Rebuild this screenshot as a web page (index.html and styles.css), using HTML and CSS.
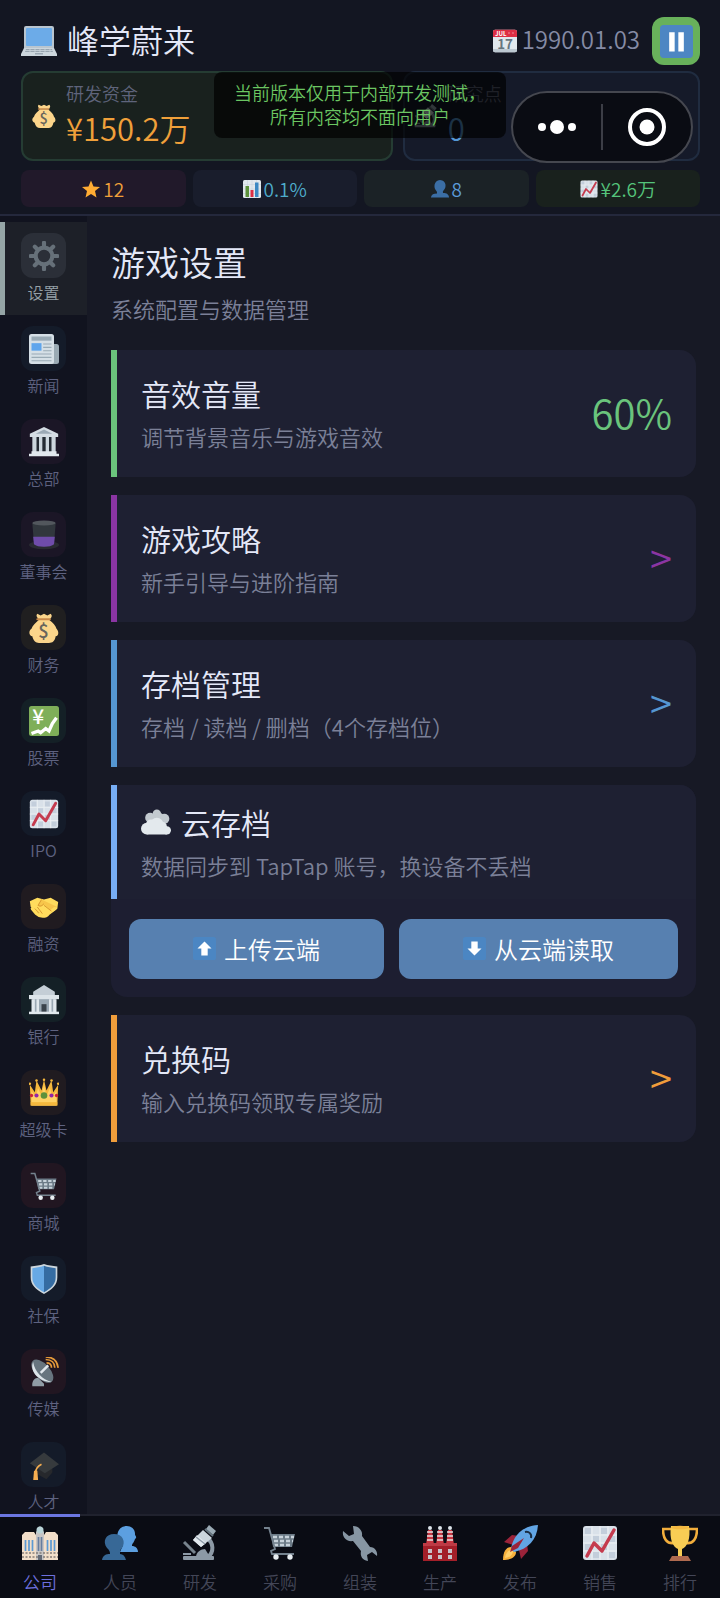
FILE: index.html
```html
<!DOCTYPE html>
<html lang="zh-CN">
<head>
<meta charset="utf-8">
<meta name="viewport" content="width=device-width, initial-scale=1">
<title>峰学蔚来</title>
<link rel="stylesheet" href="styles.css">
</head>
<body>
<svg class="sprite" aria-hidden="true">
  <symbol id="laptop" viewBox="0 0 36 36">
    <rect x="3" y="3" width="30" height="24" rx="2" fill="#b9c5cf"/><rect x="5" y="5" width="26" height="18" rx="1" fill="#6cabe8"/>
    <path d="M3 25h30l3 6v2H0v-2z" fill="#ccd6dd"/><path d="M5 26h26l1 3H4z" fill="#98a5b0"/><path d="M4 27.500h28M9 26v3M14 26v3M19 26v3M24 26v3M29 26v3" stroke="#ccd6dd" stroke-width=".8"/><path d="M14 30h8v1.500h-8z" fill="#9aa7b2"/>
  </symbol>
  <symbol id="calendar" viewBox="0 0 36 36">
    <rect y="1" width="36" height="34" rx="3" fill="#e1e8ed"/><path d="M0 12V4a3 3 0 0 1 3-3h30a3 3 0 0 1 3 3v8z" fill="#dd2e44"/><path d="M0 30h36v2a3 3 0 0 1-3 3H3a3 3 0 0 1-3-3z" fill="#bcc8d1"/>
    <text x="3" y="10" font-size="9" font-weight="700" fill="#fff">JUL</text><text x="18" y="30" text-anchor="middle" font-size="20" font-weight="700" fill="#66757f">17</text><circle cx="24" cy="6" r="1" fill="#f4abba"/><circle cx="30" cy="6" r="1" fill="#f4abba"/>
  </symbol>
  <symbol id="pause" viewBox="0 0 36 36"><rect width="36" height="36" rx="4" fill="#4d86c3"/><path d="M10 8h6v21h-6zM20 8h6v21h-6z" fill="#fff"/></symbol>
  <symbol id="bag" viewBox="0 0 36 36">
    <path d="M12 8C8 12 4 15 3 19c-4 3-3 8 1 9 1 5 4 8 8 8h12c4 0 7-2 8-8 4-1 4-6 1-9-1-4-4-7-9-11z" fill="#fbd58b"/><path d="M10 1l4 2 4-2 4 2 4-2c3 3 0 5-1 7H12C9 5 8 3 10 1z" fill="#fbd58b"/><path d="M10 7.500h15" stroke="#c98a4b" stroke-width="2.500" stroke-linecap="round"/>
    <text x="17.500" y="30" text-anchor="middle" font-size="22" font-weight="500" fill="#67645c">$</text>
  </symbol>
  <symbol id="scope" viewBox="0 0 36 36">
    <path d="M2 17l11 11" stroke="#78848e" stroke-width="3"/><path d="M25 13c7 5 7 14 1 19" fill="none" stroke="#8c99a5" stroke-width="4"/>
    <path d="M14 32c0-5 5-8 9-8l5 8z" fill="#8c99a5"/><rect x="1" y="31" width="31" height="4" rx="1" fill="#8c99a5"/><path d="M1 28h8v2H1z" fill="#8c99a5"/>
    <path d="M21 5l9 8-11 9-8-7z" fill="#ccd6dd"/><path d="M15 10l9 8-5 4-8-7z" fill="#e1e8ed"/><path d="M14 12l9 7" stroke="#8c99a5" stroke-width="1.500"/><path d="M27 0l7 6-3 4-7-6z" fill="#9aaab4"/><path d="M23 4l8 7" stroke="#66757f" stroke-width="2"/>
  </symbol>
  <symbol id="star" viewBox="0 0 36 36"><path d="M18 1l5 12 13 1-10 8 3 13-11-7-11 7 3-13L0 14l13-1z" fill="#ffac33"/></symbol>
  <symbol id="bars" viewBox="0 0 36 36"><rect width="36" height="36" rx="3" fill="#e1e8ed"/><path d="M0 9h36M0 18h36M0 27h36M9 0v36M18 0v36M27 0v36" stroke="#c5d0d8"/><path d="M5 12h7v22H5z" fill="#5c913b"/><path d="M15 20h6v14h-6z" fill="#dd2e44"/><path d="M24 5h7v29h-7z" fill="#3b88c3"/></symbol>
  <symbol id="person" viewBox="0 0 36 36"><path d="M12 27c0-3 0-4-2-6-5-5-5-20 8-21 14 1 13 16 7 21-2 2-1 3-1 5 8 0 11 3 12 8v1H0v-1c1-5 5-7 12-7z" fill="#3b6ea5"/></symbol>
  <symbol id="chart" viewBox="0 0 36 36"><rect x="1" y="1" width="34" height="34" rx="3" fill="#d9e1e9"/><path d="M3 3h6v6H3zM19 3h6v6h-6zM11 11h6v6h-6zM27 11h6v6h-6zM3 19h6v6H3zM19 19h6v6h-6zM11 27h6v6h-6zM27 27h6v6h-6z" fill="#c3cedb"/><path d="M1 10h34M1 18h34M1 26h34M10 1v34M18 1v34M26 1v34" stroke="#edf1f4"/><path d="M5 31l7-13 8 8L32 5" fill="none" stroke="#c53b4e" stroke-width="3.500" stroke-linecap="round" stroke-linejoin="round"/></symbol>
  <symbol id="gear" viewBox="0 0 36 36"><g fill="none" stroke="#667079"><circle cx="18" cy="18" r="10" stroke-width="5"/><path d="M18 2v5M18 29v5M2 18h5M29 18h5M7 7l3 3M26 26l3 3M29 7l-3 3M10 26l-3 3" stroke-width="5" stroke-linecap="round"/></g></symbol>
  <symbol id="news" viewBox="0 0 36 36"><rect x="22" y="12" width="14" height="24" rx="3" fill="#9aaab4"/><rect width="30" height="36" rx="3" fill="#d5dfe6"/><path d="M3 3h24v5H3z" fill="#99aab5"/><rect x="3" y="11" width="12" height="9" fill="#5fa5ec"/><path d="M17 12h10M17 16h10M17 20h10M3 24h24M3 28h24M3 32h24" stroke="#99aab5" stroke-width="1.300"/></symbol>
  <symbol id="temple" viewBox="0 0 36 36"><path d="M5 11h26v20H5z" fill="#242b33"/><path d="M4 12h5v18H4zM12 12h4v18h-4zM20 12h4v18h-4zM27 12h5v18h-5z" fill="#ccd6dd"/><path d="M18 0L1 8v4h34V8z" fill="#d5dde4"/><path d="M18 3l10 5H8z" fill="#9ba9b5"/><path d="M3 29h30v3h3v3H0v-3h3z" fill="#e1e8ed"/></symbol>
  <symbol id="hat" viewBox="0 0 36 36"><ellipse cx="18" cy="30" rx="18" ry="5" fill="#292b32"/><path d="M4 4h28l-2 25c-4 4-20 4-24 0z" fill="#31373d"/><path d="M5 20h26l-1 9c-4 4-20 4-24 0z" fill="#6f4caa"/><ellipse cx="18" cy="3.500" rx="14" ry="3" fill="#52575d"/></symbol>
  <symbol id="yen" viewBox="0 0 36 36"><rect width="36" height="36" rx="3" fill="#7faf59"/><path d="M3 33l8-3 3 2 6-5 4 3 4-9 5-7" fill="none" stroke="#fff" stroke-width="4"/><text x="11" y="22" text-anchor="middle" font-size="25" font-weight="500" fill="#fff">¥</text></symbol>
  <symbol id="hands" viewBox="0 0 36 36"><path d="M1 11l9-4 8 2 8-2 9 5-1 8-14 9-6-1L2 18z" fill="#ffdc5d"/><path d="M15 9l-5 7c2 3 6 1 8-1l9 8c3 0 4-2 4-4l3-1" fill="#f7c64b"/><path d="M4 20l5 6c4 4 11 4 14 0l8-6" fill="none" stroke="#ffdc5d" stroke-width="4" stroke-linecap="round"/><path d="M7 20l5 5M10 18l6 8M18 16l9 7M15 9l-4 7c3 2 5 0 7-2" fill="none" stroke="#d99b32" stroke-width="1.200"/></symbol>
  <symbol id="bank" viewBox="0 0 36 36"><path d="M4 15h28v18H4z" fill="#9aa8b3"/><path d="M18 0L5 8v7h26V8z" fill="#c4ced6"/><path d="M0 12h36v5H0z" fill="#dce4e9"/><path d="M3 17h4v16H3zM9 17h3v16H9zM24 17h3v16h-3zM29 17h4v16h-4z" fill="#e1e8ed"/><path d="M15 23h6v10h-6z" fill="#3a434b"/><path d="M0 32h36v3H0z" fill="#e1e8ed"/></symbol>
  <symbol id="crown" viewBox="0 0 36 36"><path d="M2 33L1 8l6 9 2-14 6 12 3-13 3 13 6-12 2 14 6-9-1 25z" fill="#f5b83d"/><path d="M3 33V16l5 6 3-10 4 10 3-14 3 14 4-10 3 10 5-6v17z" fill="#ffd266"/><path d="M2 29h32v4H2z" fill="#f5b83d"/><g fill="#f5b83d"><circle cx="1" cy="7" r="1.500"/><circle cx="9" cy="3" r="1.500"/><circle cx="18" cy="2" r="1.500"/><circle cx="27" cy="3" r="1.500"/><circle cx="35" cy="7" r="1.500"/></g><circle cx="18" cy="21" r="4" fill="#5c913b"/><circle cx="9" cy="21" r="2.500" fill="#9226a8"/><circle cx="27" cy="21" r="2.500" fill="#9226a8"/><circle cx="3" cy="21" r="2" fill="#c23"/><circle cx="33" cy="21" r="2" fill="#c23"/></symbol>
  <symbol id="cart" viewBox="0 0 36 36"><path d="M9 9h24l-3 13H11z" fill="#6c7b87"/><g stroke="#c7d2da" stroke-width="2.500" stroke-dasharray="4 2"><path d="M11 12h21M12 16h19M12 20h18"/></g><path d="M2 3h5l6 21-4 2 1 3h22" fill="none" stroke="#74828e" stroke-width="1.800"/><circle cx="14" cy="32" r="2.700" fill="#e7edf1"/><circle cx="28" cy="32" r="2.700" fill="#e7edf1"/></symbol>
  <symbol id="shield" viewBox="0 0 36 36"><path d="M18 0c5 2 10 2 16 3v13c0 9-6 15-16 20C8 31 2 25 2 16V3c6-1 11-1 16-3z" fill="#ccd6dd"/><path d="M18 2C13 4 9 4 4 5v11c0 8 5 13 14 18z" fill="#67a9e5"/><path d="M18 2c5 2 9 2 14 3v11c0 8-5 13-14 18z" fill="#356ca2"/></symbol>
  <symbol id="dish" viewBox="0 0 36 36"><path d="M4 35c-1-6 3-10 7-10l7 7v3z" fill="#8f9ca5"/><ellipse cx="16" cy="17" rx="9" ry="17" transform="rotate(-42 16 17)" fill="#67757f"/><path d="M5 6c-5 11 7 24 22 24C16 27 7 18 5 6z" fill="#dce4e9"/><path d="M14 19l9-9" stroke="#e1e8ed" stroke-width="3"/><path d="M21 7c4 0 6 2 6 6M20 3c7 0 11 4 11 10M20 0c9 0 14 5 15 13" fill="none" stroke="#e69a3a" stroke-width="2"/></symbol>
  <symbol id="grad" viewBox="0 0 36 36"><path d="M8 20v8l13 7 7-8v-9z" fill="#26282c"/><path d="M18 3l18 14-17 11L1 16z" fill="#363a3d"/><path d="M15 17c-4 2-7 4-7 10" fill="none" stroke="#f5ad50" stroke-width="2"/><path d="M6 25h4l1 12H5z" fill="#f5ad50"/></symbol>
  <symbol id="cloud" viewBox="0 0 36 36"><g fill="#c3cad0"><circle cx="19" cy="8" r="5"/><circle cx="11" cy="13" r="6"/><circle cx="28" cy="14" r="6"/><circle cx="20" cy="14" r="8"/></g><g fill="#e3e9ed"><circle cx="19" cy="21" r="8"/><circle cx="7" cy="26" r="7"/><circle cx="12" cy="21" r="6"/><circle cx="26" cy="23" r="5"/><circle cx="31" cy="28" r="5"/><path d="M7 23h24v10H7z"/></g></symbol>
  <symbol id="up" viewBox="0 0 36 36"><rect width="36" height="36" rx="4" fill="#4b86c3"/><path d="M18 7l11 11h-6v11H13V18H7z" fill="#fff"/></symbol>
  <symbol id="down" viewBox="0 0 36 36"><rect width="36" height="36" rx="4" fill="#4b86c3"/><path d="M18 29L7 18h6V7h10v11h6z" fill="#fff"/></symbol>
  <symbol id="office" viewBox="0 0 36 36"><path d="M0 10l3-3h9l2 3h8l2-3h9l3 3v25H0z" fill="#f2dfca"/><path d="M14 7l4-6 4 6v28h-8z" fill="#c7c5c5"/><circle cx="18" cy="5" r="3.500" fill="#b9d4d8"/><path d="M3.500 15v11M7 15v11M10.500 15v11M25.500 15v11M29 15v11M32.500 15v11" stroke="#5c9ad3" stroke-width="1.700"/><path d="M16.500 12v14M19.500 12v14" stroke="#667d9e" stroke-width="1.700"/><path d="M0 28h36M0 32h36" stroke="#857e78" stroke-dasharray="2 1.500" stroke-width="1.500"/><path d="M16 30h4v5h-4z" fill="#646b77"/></symbol>
  <symbol id="people" viewBox="0 0 36 36"><path d="M21 20c-4-4-7-7-5-13 3-9 18-8 17 3 1 1 2 3 0 4-1 4-3 4-3 7 3 0 6 2 6 6H18z" fill="#5c9fe0"/><path d="M8 29c0-3-1-4-3-6-5-7-1-14 7-14 9 0 12 8 8 14-2 2-2 3-2 6 3 0 5 2 6 6H0c1-5 4-6 8-6z" fill="#376896"/></symbol>
  <symbol id="wrench" viewBox="0 0 36 36"><path d="M1 6l6 5 5-2-1-8c6 0 10 5 9 10l8 11c5 0 8 5 7 9l-5-4-5 3 1 6c-6-1-8-5-7-10l-8-10C4 17 0 12 1 6z" fill="#8796a3"/></symbol>
  <symbol id="factory" viewBox="0 0 36 36"><path d="M6 5h4l2 15H4zM16 5h4l2 15h-8zM26 5h4l2 15h-8z" fill="#c73540"/><path d="M5 7h6M5 11h6M5 15h6M15 7h6M15 11h6M15 15h6M25 7h6M25 11h6M25 15h6" stroke="#e8e1e2" stroke-width="1.700"/><g fill="#dce4e9"><circle cx="8" cy="3" r="2"/><circle cx="18" cy="3" r="2"/><circle cx="28" cy="3" r="2"/></g><path d="M1 18h34v18H1z" fill="#a31f29"/><path d="M1 18h34v3H1z" fill="#bd3b45"/><path d="M6 24h4v4H6zM16 24h4v4h-4zM26 24h4v4h-4zM6 30h4v4H6zM16 30h4v4h-4zM26 30h4v4h-4z" fill="#c8c4cb"/></symbol>
  <symbol id="rocket" viewBox="0 0 36 36"><path d="M2 17l8-7 7 1-6 9zM25 19l1 7-7 8-2-9z" fill="#9b233a"/><path d="M1 35c0-9 4-13 8-13l5 5c0 5-5 8-13 8z" fill="#f6b13d"/><path d="M3 33c1-6 4-8 7-8l1 1c0 4-3 6-8 7z" fill="#ffd06a"/><path d="M9 24C11 11 20 1 36 0c-1 15-10 24-24 27z" fill="#62a5e4"/><path d="M23 7c4-1 7 2 6 6" fill="none" stroke="#192c41" stroke-width="2"/><path d="M8 27l2-6 12-8-6 10z" fill="#9b233a"/></symbol>
  <symbol id="trophy" viewBox="0 0 36 36"><path d="M9 4H1c0 10 4 15 11 14M27 4h8c0 10-4 15-11 14" fill="none" stroke="#f2ae3c" stroke-width="2.600"/><path d="M9 1h18c2 13-2 21-7 23v8h-4v-8C11 22 7 14 9 1z" fill="#f8cd54"/><ellipse cx="18" cy="2.500" rx="9" ry="1.800" fill="#f4b942"/><path d="M10 31h16l3 5H7z" fill="#af6a4f"/></symbol>
</svg>

<header class="header">
  <div class="title-row">
    <svg class="ic-laptop"><use href="#laptop"/></svg>
    <h1 class="company">峰学蔚来</h1>
    <svg class="ic-date"><use href="#calendar"/></svg>
    <time class="date" datetime="1990-01-03">1990.01.03</time>
    <button class="pause" type="button" aria-label="暂停"><svg class="ic-pause"><use href="#pause"/></svg></button>
  </div>
  <div class="resources">
    <section class="resource resource-money">
      <svg class="ic-resource"><use href="#bag"/></svg>
      <div class="resource-text"><div class="resource-label">研发资金</div><div class="resource-value">¥150.2万</div></div>
    </section>
    <section class="resource resource-points">
      <svg class="ic-resource"><use href="#scope"/></svg>
      <div class="resource-text"><div class="resource-label">研究点</div><div class="resource-value">0</div></div>
    </section>
  </div>
  <div class="chips">
    <div class="chip chip-star"><svg class="ic-chip"><use href="#star"/></svg>12</div>
    <div class="chip chip-share"><svg class="ic-chip"><use href="#bars"/></svg>0.1%</div>
    <div class="chip chip-staff"><svg class="ic-chip"><use href="#person"/></svg>8</div>
    <div class="chip chip-income"><svg class="ic-chip"><use href="#chart"/></svg>¥2.6万</div>
  </div>
  <div class="toast" role="status">当前版本仅用于内部开发测试，<br>所有内容均不面向用户</div>
  <div class="capsule">
    <button class="capsule-btn" type="button" aria-label="更多"><svg class="ic-more" viewBox="0 0 40 16"><g fill="#fff"><circle cx="5" cy="8" r="4"/><circle cx="20" cy="8" r="7"/><circle cx="35" cy="8" r="4"/></g></svg></button>
    <span class="capsule-line"></span>
    <button class="capsule-btn" type="button" aria-label="关闭"><svg class="ic-close" viewBox="0 0 38 38"><circle cx="19" cy="19" r="17" fill="none" stroke="#fff" stroke-width="4"/><circle cx="19" cy="19" r="7.500" fill="#fff"/></svg></button>
  </div>
</header>

<div class="body">
  <nav class="side" aria-label="公司">
    <a class="side-item is-active" href="#"><span class="tile tile-gray"><svg class="ic-side"><use href="#gear"/></svg></span>设置</a>
    <a class="side-item" href="#"><span class="tile tile-blue"><svg class="ic-side"><use href="#news"/></svg></span>新闻</a>
    <a class="side-item" href="#"><span class="tile tile-purple"><svg class="ic-side"><use href="#temple"/></svg></span>总部</a>
    <a class="side-item" href="#"><span class="tile tile-purple"><svg class="ic-side"><use href="#hat"/></svg></span>董事会</a>
    <a class="side-item" href="#"><span class="tile tile-yellow"><svg class="ic-side"><use href="#bag"/></svg></span>财务</a>
    <a class="side-item" href="#"><span class="tile tile-teal"><svg class="ic-side"><use href="#yen"/></svg></span>股票</a>
    <a class="side-item" href="#"><span class="tile tile-blue"><svg class="ic-side"><use href="#chart"/></svg></span>IPO</a>
    <a class="side-item" href="#"><span class="tile tile-orange"><svg class="ic-side"><use href="#hands"/></svg></span>融资</a>
    <a class="side-item" href="#"><span class="tile tile-teal"><svg class="ic-side"><use href="#bank"/></svg></span>银行</a>
    <a class="side-item" href="#"><span class="tile tile-orange"><svg class="ic-side"><use href="#crown"/></svg></span>超级卡</a>
    <a class="side-item" href="#"><span class="tile tile-red"><svg class="ic-side"><use href="#cart"/></svg></span>商城</a>
    <a class="side-item" href="#"><span class="tile tile-blue"><svg class="ic-side"><use href="#shield"/></svg></span>社保</a>
    <a class="side-item" href="#"><span class="tile tile-red"><svg class="ic-side"><use href="#dish"/></svg></span>传媒</a>
    <a class="side-item" href="#"><span class="tile tile-blue"><svg class="ic-side"><use href="#grad"/></svg></span>人才</a>
  </nav>

  <main class="main">
    <h2 class="page-title">游戏设置</h2>
    <p class="page-sub">系统配置与数据管理</p>
    <div class="cards">
      <button class="card card-green" type="button">
        <span class="card-text"><span class="card-title">音效音量</span><span class="card-desc">调节背景音乐与游戏音效</span></span>
        <span class="card-end">60%</span>
      </button>
      <button class="card card-purple" type="button">
        <span class="card-text"><span class="card-title">游戏攻略</span><span class="card-desc">新手引导与进阶指南</span></span>
        <span class="card-end">&gt;</span>
      </button>
      <button class="card card-blue" type="button">
        <span class="card-text"><span class="card-title">存档管理</span><span class="card-desc">存档 / 读档 / 删档（4个存档位）</span></span>
        <span class="card-end">&gt;</span>
      </button>
      <section class="cloud">
        <div class="cloud-head">
          <h3 class="card-title"><svg class="ic-cloud"><use href="#cloud"/></svg>云存档</h3>
          <p class="card-desc">数据同步到 TapTap 账号，换设备不丢档</p>
        </div>
        <div class="cloud-actions">
          <button class="cloud-btn" type="button"><svg class="ic-arrow"><use href="#up"/></svg>上传云端</button>
          <button class="cloud-btn" type="button"><svg class="ic-arrow"><use href="#down"/></svg>从云端读取</button>
        </div>
      </section>
      <button class="card card-orange" type="button">
        <span class="card-text"><span class="card-title">兑换码</span><span class="card-desc">输入兑换码领取专属奖励</span></span>
        <span class="card-end">&gt;</span>
      </button>
    </div>
  </main>
</div>

<nav class="tabs" aria-label="主导航">
  <a class="tab is-active" href="#"><svg class="ic-tab"><use href="#office"/></svg>公司</a>
  <a class="tab" href="#"><svg class="ic-tab"><use href="#people"/></svg>人员</a>
  <a class="tab" href="#"><svg class="ic-tab"><use href="#scope"/></svg>研发</a>
  <a class="tab" href="#"><svg class="ic-tab"><use href="#cart"/></svg>采购</a>
  <a class="tab" href="#"><svg class="ic-tab"><use href="#wrench"/></svg>组装</a>
  <a class="tab" href="#"><svg class="ic-tab"><use href="#factory"/></svg>生产</a>
  <a class="tab" href="#"><svg class="ic-tab"><use href="#rocket"/></svg>发布</a>
  <a class="tab" href="#"><svg class="ic-tab"><use href="#chart"/></svg>销售</a>
  <a class="tab" href="#"><svg class="ic-tab"><use href="#trophy"/></svg>排行</a>
</nav>
</body>
</html>
```
FILE: styles.css
```css
* { box-sizing: border-box; }

body {
  margin: 0;
  height: 100vh;
  display: flex;
  flex-direction: column;
  background: #171925;
  color: #e4e8f8;
  font-family: "Noto Sans CJK SC", "Noto Sans", sans-serif;
  font-weight: 350;
}

h1, h2, h3, p { margin: 0; font-weight: inherit; }
a { color: inherit; text-decoration: none; }
button { border: 0; padding: 0; font: inherit; color: inherit; cursor: pointer; }
svg { flex: none; display: block; }
.sprite { display: none; }

/* Header */
.header {
  position: relative;
  padding: 17px 20px 7px 21px;
  background: #131622;
  border-bottom: 2px solid #24283c;
}
.title-row { display: flex; align-items: center; height: 48px; }
.ic-laptop { width: 36px; height: 36px; }
.company { flex: 1; margin-left: 10px; padding-bottom: 4px; font-size: 32px; line-height: 44px; }
.ic-date { width: 24px; height: 24px; margin-right: 5px; }
.date { padding-bottom: 4px; font-size: 24px; line-height: 44px; color: #858ba5; }
.pause {
  display: grid;
  place-items: center;
  width: 48px;
  height: 48px;
  margin-left: 12px;
  border-radius: 12px;
  background: #68b15b;
}
.ic-pause { width: 33px; height: 33px; }

.resources { display: grid; grid-template-columns: 5fr 4fr; gap: 10px; margin-top: 6px; }
.resource {
  display: flex;
  align-items: center;
  gap: 10px;
  height: 90px;
  padding: 0 9px;
  border: 2px solid;
  border-radius: 12px;
}
.resource-money { background: #19211e; border-color: #253c33; }
.resource-points { background: #151a29; border-color: #202c40; }
.resource-text { padding-bottom: 2px; }
.ic-resource { width: 24px; height: 26px; }
.resource-label { font-size: 18px; line-height: 26px; color: #5f647b; }
.resource-value { font-size: 31px; line-height: 44px; color: #f0a03a; }
.resource-points .resource-value { color: #5598d5; }

.chips { display: grid; grid-template-columns: repeat(4, 1fr); gap: 7px; margin-top: 9px; }
.chip {
  display: flex;
  align-items: center;
  justify-content: center;
  gap: 3px;
  height: 37px;
  border-radius: 8px;
  font-size: 19px;
  line-height: 24px;
}
.ic-chip { width: 18px; height: 18px; }
.chip-star { background: #21192a; color: #f0a03a; }
.chip-share { background: #191d2c; color: #4eaccb; }
.chip-staff { background: #1b2226; color: #5c9bd8; }
.chip-income { background: #19211d; color: #55c47b; }

.toast {
  position: absolute;
  top: 72px;
  left: 50%;
  transform: translateX(-50%);
  padding: 8px 20px 10px;
  border-radius: 8px;
  background: rgba(0, 0, 0, 0.68);
  color: #6bc662;
  font-size: 18px;
  line-height: 24px;
  text-align: center;
  white-space: nowrap;
}
.capsule {
  position: absolute;
  top: 91px;
  right: 27px;
  display: flex;
  align-items: center;
  width: 182px;
  height: 72px;
  border: 2px solid #45474f;
  border-radius: 36px;
  background: #0a0c13;
}
.capsule-btn { flex: 1; display: grid; place-items: center; height: 100%; background: none; }
.capsule-line { width: 2px; height: 46px; background: #3c3e46; }
.ic-more { width: 40px; height: 16px; }
.ic-close { width: 38px; height: 38px; }

/* Body */
.body { flex: 1; display: flex; min-height: 0; }
.side {
  width: 87px;
  padding-top: 6px;
  overflow-y: auto;
  scrollbar-width: none;
  background: #11131f;
}
.side-item {
  display: flex;
  flex-direction: column;
  align-items: center;
  gap: 4px;
  padding: 11px 0 13px;
  font-size: 16px;
  line-height: 20px;
  color: #5e6280;
}
.side-item.is-active { background: #1d2028; box-shadow: inset 5px 0 #95a5a6; color: #95a0a7; }
.tile { display: grid; place-items: center; width: 45px; height: 45px; border-radius: 12px; }
.tile-gray { background: #2b2f38; }
.tile-blue { background: #141b29; }
.tile-purple { background: #1b1626; }
.tile-yellow { background: #201f20; }
.tile-teal { background: #142026; }
.tile-orange { background: #201b20; }
.tile-red { background: #211621; }
.ic-side { width: 30px; height: 30px; }

.main { flex: 1; min-width: 0; padding: 22px 24px; overflow-y: auto; }
.page-title { font-size: 34px; line-height: 48px; }
.page-sub { margin-top: 6px; font-size: 22px; line-height: 32px; color: #7b8098; }
.cards { display: flex; flex-direction: column; gap: 18px; margin-top: 26px; }
.card {
  display: flex;
  align-items: center;
  justify-content: space-between;
  padding: 22px 24px 25px;
  border-left: 6px solid;
  border-radius: 0 16px 16px 0;
  background: #1e2032;
  text-align: left;
}
.card-green { border-color: #6ac47c; }
.card-purple { border-color: #8b35a3; }
.card-blue { border-color: #5596d1; }
.card-orange { border-color: #f09d3b; }
.card-text { display: block; }
.card-title { display: flex; align-items: center; gap: 10px; font-size: 30px; line-height: 42px; color: #e4e8f8; }
.card-desc { display: block; margin-top: 6px; font-size: 22px; line-height: 32px; color: #7b8098; }
.card-end { font-size: 40px; line-height: 48px; }
.card-green .card-end { color: #6ac47c; }
.card-purple .card-end { color: #8b35a3; }
.card-blue .card-end { color: #5596d1; }
.card-orange .card-end { color: #f09d3b; }

.cloud { border-radius: 0 16px 16px 16px; background: #1d1e31; }
.cloud-head {
  padding: 16px 24px 18px;
  border-left: 6px solid #77adf4;
  border-radius: 0 16px 0 0;
  background: #1e2032;
}
.ic-cloud { width: 30px; height: 30px; }
.cloud-actions { display: flex; gap: 15px; padding: 20px 18px 18px; }
.cloud-btn {
  flex: 1 1 auto;
  display: flex;
  align-items: center;
  justify-content: center;
  gap: 8px;
  height: 60px;
  padding-bottom: 2px;
  border-radius: 12px;
  background: #5780b0;
  color: #fff;
  font-size: 24px;
}
.ic-arrow { width: 23px; height: 23px; }

/* Bottom tabs */
.tabs {
  display: flex;
  height: 84px;
  background: #0a0c14;
  border-top: 2px solid #20222e;
}
.tab {
  flex: 1;
  display: flex;
  flex-direction: column;
  align-items: center;
  gap: 9px;
  padding-top: 9px;
  font-size: 17px;
  line-height: 24px;
  color: #434657;
}
.tab.is-active { margin-top: -2px; padding-top: 8px; border-top: 3px solid #6b76e0; color: #6d70dd; }
.ic-tab { width: 36px; height: 36px; }
```
